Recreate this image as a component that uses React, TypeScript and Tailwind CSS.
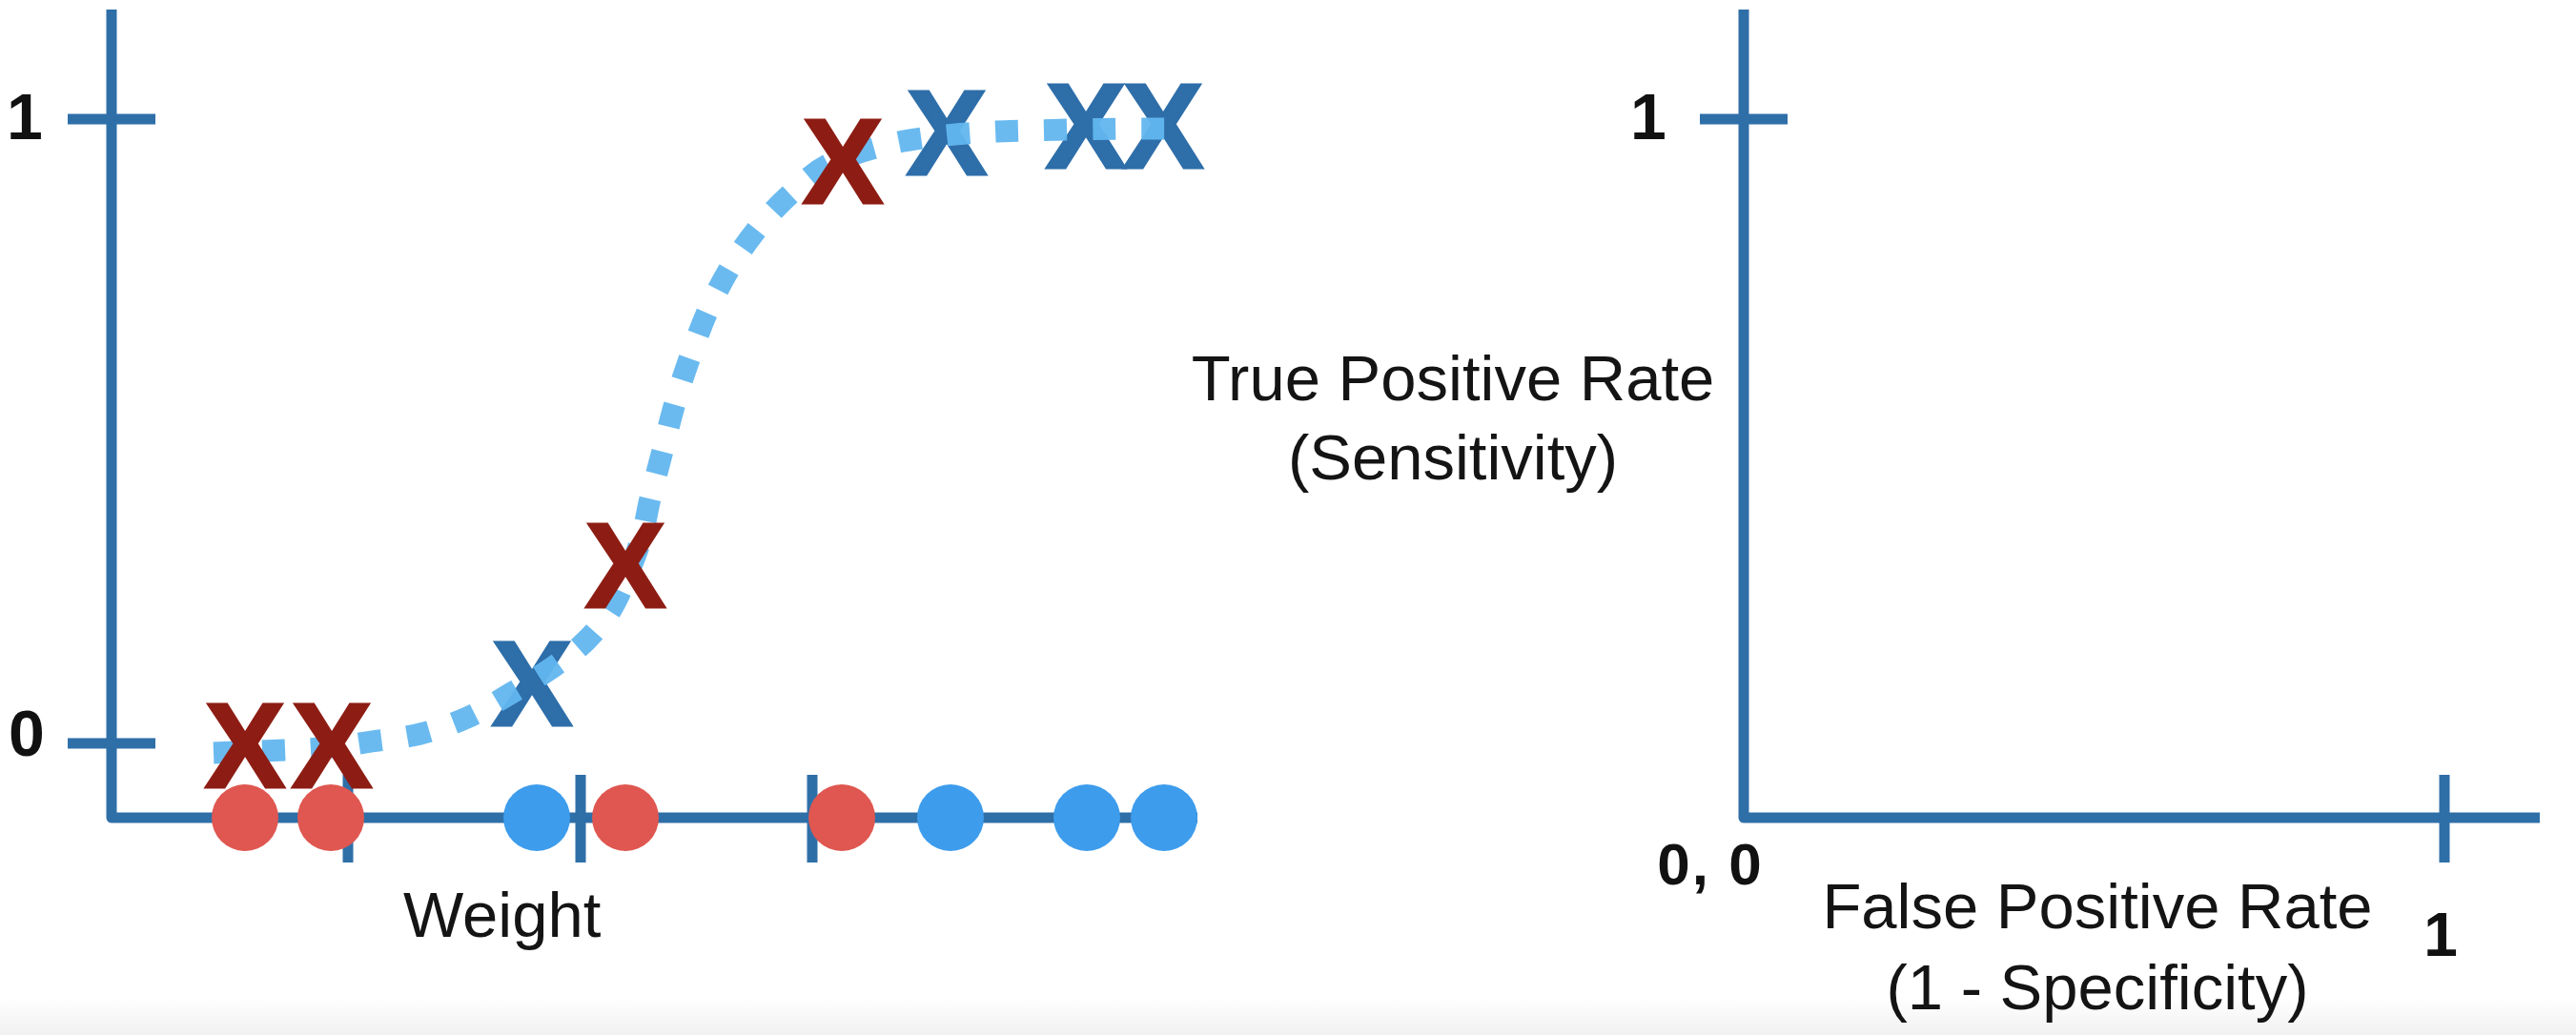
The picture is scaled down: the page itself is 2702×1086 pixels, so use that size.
type Pt = [number, number];

const AXIS = "#2f6fa8";
const RED_X = "#8d1d14";
const BLUE_X = "#2e6ea9";
const RED_DOT = "#df5750";
const BLUE_DOT = "#3d9cec";
const CURVE = "#62b6ef";
const FONT = "Liberation Sans, Arial, sans-serif";

// sampled along the dotted logistic curve
const CURVE_POINTS: Pt[] = [
  [224, 790], [300, 787], [347, 784], [390, 778], [441, 770], [490, 753],
  [535, 728], [580, 700], [615, 672], [642, 638], [662, 594], [674, 560],
  [682, 523], [695, 473], [708, 423], [724, 374], [743, 325], [767, 279],
  [797, 237], [833, 200], [870, 172], [926, 153], [975, 144], [1028, 139],
  [1080, 137], [1183, 135], [1248, 135],
];

const DOTS = [
  { x: 257, color: RED_DOT },
  { x: 347, color: RED_DOT },
  { x: 563, color: BLUE_DOT },
  { x: 656, color: RED_DOT },
  { x: 883, color: RED_DOT },
  { x: 997, color: BLUE_DOT },
  { x: 1140, color: BLUE_DOT },
  { x: 1221, color: BLUE_DOT },
];

const RED_MARKS: Pt[] = [[257, 783], [348, 783], [656, 594], [884, 170]];
const BLUE_MARKS: Pt[] = [[558, 718], [993, 140], [1139, 133], [1220, 133]];

function smoothPath(pts: Pt[]) {
  let d = `M${pts[0][0]} ${pts[0][1]}`;
  for (let i = 0; i < pts.length - 1; i++) {
    const p0 = pts[i - 1] ?? pts[i];
    const p1 = pts[i];
    const p2 = pts[i + 1];
    const p3 = pts[i + 2] ?? p2;
    const c1x = p1[0] + (p2[0] - p0[0]) / 6;
    const c1y = p1[1] + (p2[1] - p0[1]) / 6;
    const c2x = p2[0] - (p3[0] - p1[0]) / 6;
    const c2y = p2[1] - (p3[1] - p1[1]) / 6;
    d += ` C${c1x.toFixed(1)} ${c1y.toFixed(1)} ${c2x.toFixed(1)} ${c2y.toFixed(1)} ${p2[0]} ${p2[1]}`;
  }
  return d;
}

function Mark({ at, color }: { at: Pt; color: string }) {
  return (
    <text
      x={at[0]}
      y={at[1] + 43}
      textAnchor="middle"
      fontFamily={FONT}
      fontWeight={700}
      fontSize={126}
      fill={color}
      stroke={color}
      strokeWidth={3}
    >
      X
    </text>
  );
}

function TickLabel({ x, y, size, children, spacing }: { x: number; y: number; size: number; children: string; spacing?: number }) {
  return (
    <text x={x} y={y} textAnchor="middle" fontFamily={FONT} fontWeight={700} fontSize={size} letterSpacing={spacing} fill="#111">
      {children}
    </text>
  );
}

function LogisticPanel() {
  return (
    <div className="flex w-[1246px] shrink-0 flex-col">
      <svg width={1246} height={918} className="block overflow-visible">
        {/* axes + ticks */}
        <g stroke={AXIS} strokeWidth={11} fill="none">
          <path d="M117 10 V858 H1256" strokeLinejoin="round" />
          <path d="M71 125 H163" />
          <path d="M71 780 H163" />
          <path d="M365 813 V905" />
          <path d="M609 813 V905" />
          <path d="M852 813 V905" />
        </g>
        <TickLabel x={26} y={146} size={68}>1</TickLabel>
        <TickLabel x={28} y={793} size={68}>0</TickLabel>

        {DOTS.map((dot) => (
          <circle key={dot.x} cx={dot.x} cy={858} r={35} fill={dot.color} />
        ))}

        {BLUE_MARKS.map((m) => (
          <Mark key={m[0]} at={m} color={BLUE_X} />
        ))}

        {/* dotted probability curve */}
        <path
          d={smoothPath(CURVE_POINTS)}
          fill="none"
          stroke={CURVE}
          strokeWidth={23}
          strokeDasharray="24 27"
          opacity={0.95}
        />

        {RED_MARKS.map((m) => (
          <Mark key={m[0]} at={m} color={RED_X} />
        ))}
      </svg>
      <p className="pl-[423px] text-[67px] leading-[84px]">Weight</p>
    </div>
  );
}

function RocPanel() {
  return (
    <div className="flex w-[900px] shrink-0 flex-col">
      <svg width={900} height={908} className="block overflow-visible">
        <g stroke={AXIS} strokeWidth={11} fill="none">
          <path d="M27 10 V858 H862" strokeLinejoin="round" />
          <path d="M-19 125 H73" />
          <path d="M762 813 V905" />
        </g>
        <TickLabel x={-73} y={146} size={68}>1</TickLabel>
        <TickLabel x={-8} y={928} size={62} spacing={2}>0, 0</TickLabel>
        <TickLabel x={758} y={1003} size={64}>1</TickLabel>
      </svg>
      <div className="w-[796px] whitespace-nowrap text-center text-[67px] leading-[85px]">
        <p>False Positive Rate</p>
        <p>(1 - Specificity)</p>
      </div>
    </div>
  );
}

export default function App() {
  return (
    <div className="relative h-[1086px] w-[2702px] overflow-hidden bg-white font-['Liberation_Sans',Arial,sans-serif] text-[#141414]">
      <div className="absolute inset-x-0 bottom-0 h-[40px] bg-linear-to-b from-white to-[#f1f1f1]" />
      <div className="relative flex">
        <LogisticPanel />
        <div className="w-[556px] shrink-0 whitespace-nowrap pt-[355px] text-center text-[67px] leading-[83px]">
          <p>True Positive Rate</p>
          <p>(Sensitivity)</p>
        </div>
        <RocPanel />
      </div>
    </div>
  );
}
